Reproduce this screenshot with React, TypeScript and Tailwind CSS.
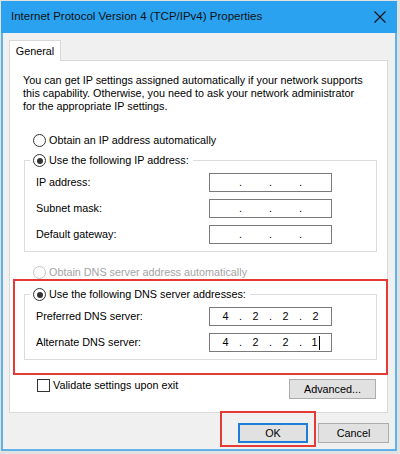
import { Fragment } from "react"

type RadioProps = {
  label: string
  checked?: boolean
  disabled?: boolean
}

function Radio({ label, checked, disabled }: RadioProps) {
  return (
    <span className="flex h-[13px] items-center gap-[3px] leading-[13px]">
      <span
        className={`flex h-[13px] w-[13px] items-center justify-center rounded-full border bg-white ${
          disabled ? "border-[#c4c4c4]" : "border-[#333333]"
        }`}
      >
        {checked && <span className="h-[6px] w-[6px] rounded-full bg-[#333333]" />}
      </span>
      <span className={disabled ? "text-[#a3a3a3]" : "text-black"}>{label}</span>
    </span>
  )
}

function IpField({ parts = ["", "", "", ""], caret = false }: { parts?: string[]; caret?: boolean }) {
  return (
    <div className="flex h-[19px] w-[123px] items-center border border-[#7a7a7a] bg-white pl-[3px]">
      {parts.map((p, i) => (
        <Fragment key={i}>
          <span className="flex w-[25px] items-center justify-center">
            {p}
            {caret && i === 3 && <span className="ml-px inline-block h-[14px] w-px bg-black" />}
          </span>
          {i < 3 && <span className="w-[5px] text-center">.</span>}
        </Fragment>
      ))}
    </div>
  )
}

function FieldRow({ label, children }: { label: string; children: React.ReactNode }) {
  return (
    <div className="flex h-[19px] items-center">
      <span className="w-[173px]">{label}</span>
      {children}
    </div>
  )
}

export default function App() {
  return (
    <div className="h-[454px] w-[400px] bg-[#e2e2e2] pb-[3px] pl-px pr-[3px] pt-px font-['Liberation_Sans',Arial,sans-serif] text-[10.8px] text-black">
      <div className="flex h-full flex-col border-x-2 border-b-2 border-[#5fb1ea]">
        {/* ── Title bar ─────────────────────────────────────────────── */}
        <div className="-mx-[2px] flex h-[32px] items-center justify-between bg-[#2aa2f0] pl-[10px] pr-[11px]">
          <span className="text-[11.5px] text-[#111111]">Internet Protocol Version 4 (TCP/IPv4) Properties</span>
          <svg width="12" height="12" viewBox="0 0 12 12" className="text-[#111111]">
            <path d="M0.5 0.5 L11.5 11.5 M11.5 0.5 L0.5 11.5" stroke="currentColor" strokeWidth="1.1" />
          </svg>
        </div>

        {/* ── Body ──────────────────────────────────────────────────── */}
        <div className="flex flex-1 flex-col bg-[#f0f0f0] pb-[6px] pl-[6px] pr-[6px] pt-[7px]">
          {/* Tab */}
          <div className="relative z-10 -mb-px flex h-[21px] w-[52px] items-center justify-center border border-b-0 border-[#d9d9d9] bg-white">
            General
          </div>

          {/* Panel */}
          <div className="mr-px flex flex-col border border-[#d9d9d9] bg-white pb-[13px] pt-[13px]">
            <p className="pl-[13px] leading-[13px]">
              You can get IP settings assigned automatically if your network supports
              <br />
              this capability. Otherwise, you need to ask your network administrator
              <br />
              for the appropriate IP settings.
            </p>

            <div className="ml-[23px] mt-[21px]">
              <Radio label="Obtain an IP address automatically" />
            </div>

            <fieldset className="ml-[14px] mr-[10px] mt-[7px] border border-[#dcdcdc] px-[5px] pb-[7px]">
              <legend className="pl-[3px] pr-[4px]">
                <Radio label="Use the following IP address:" checked />
              </legend>
              <div className="flex flex-col gap-[7px] pl-[6px] pt-[6px]">
                <FieldRow label="IP address:">
                  <IpField />
                </FieldRow>
                <FieldRow label="Subnet mask:">
                  <IpField />
                </FieldRow>
                <FieldRow label="Default gateway:">
                  <IpField />
                </FieldRow>
              </div>
            </fieldset>

            <div className="ml-[23px] mt-[14px]">
              <Radio label="Obtain DNS server address automatically" disabled />
            </div>

            {/* DNS — highlighted */}
            <div className="-mr-px ml-[3px] border-2 border-[#e53b36] pb-[13px]">
              <fieldset className="ml-[9px] mr-[9px] mt-[7px] border border-[#dcdcdc] px-[5px] pb-[7px]">
                <legend className="pl-[3px] pr-[4px]">
                  <Radio label="Use the following DNS server addresses:" checked />
                </legend>
                <div className="flex flex-col gap-[7px] pl-[6px] pt-[6px]">
                  <FieldRow label="Preferred DNS server:">
                    <IpField parts={["4", "2", "2", "2"]} />
                  </FieldRow>
                  <FieldRow label="Alternate DNS server:">
                    <IpField parts={["4", "2", "2", "1"]} caret />
                  </FieldRow>
                </div>
              </fieldset>
            </div>

            <div className="mt-[4px] flex items-start justify-between pl-[27px] pr-[11px]">
              <span className="flex h-[13px] items-center gap-[3px] leading-[13px]">
                <span className="h-[13px] w-[13px] border border-[#333333] bg-white" />
                Validate settings upon exit
              </span>
              <button className="flex h-[20px] w-[87px] items-center justify-center border border-[#adadad] bg-[#e1e1e1]">
                Advanced...
              </button>
            </div>
          </div>

          {/* Dialog buttons */}
          <div className="mt-[10px] flex justify-end gap-[10px]">
            <div className="relative">
              <button className="flex h-[20px] w-[70px] items-center justify-center border-2 border-[#1f7fd6] bg-[#e1e1e1]">
                OK
              </button>
              <span className="absolute -bottom-[4px] -left-[18px] -right-[8px] -top-[12px] border-2 border-[#e53b36]" />
            </div>
            <button className="flex h-[20px] w-[71px] items-center justify-center border border-[#adadad] bg-[#e1e1e1]">
              Cancel
            </button>
          </div>
        </div>
      </div>
    </div>
  )
}
